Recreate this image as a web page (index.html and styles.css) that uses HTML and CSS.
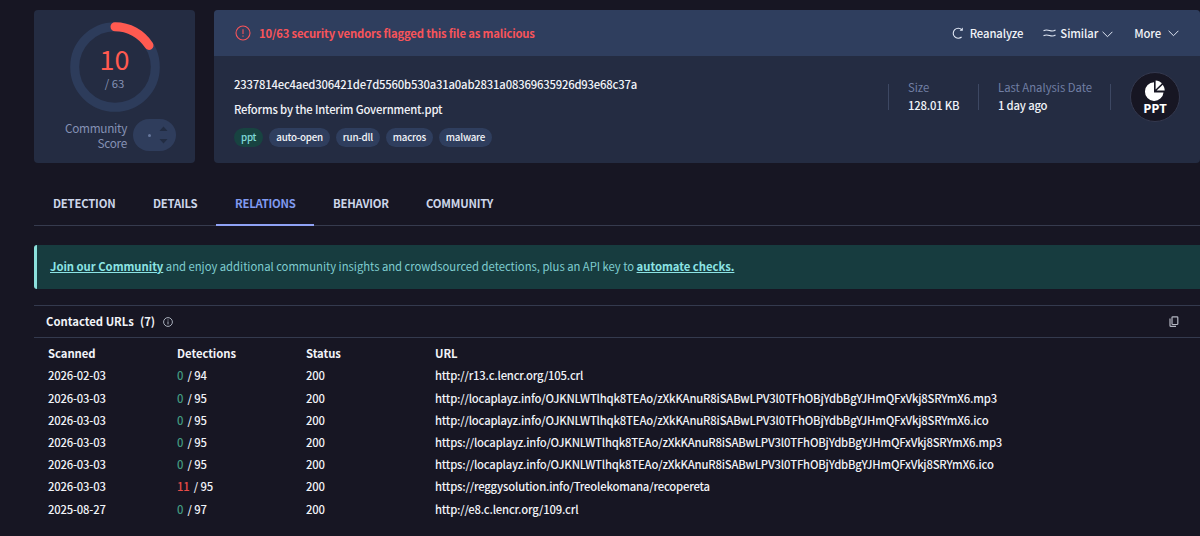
FILE: index.html
```html
<!DOCTYPE html>
<html lang="en">
<head>
    <meta charset="UTF-8">
    <meta name="viewport" content="width=device-width, initial-scale=1.0">
    <title>File report - Relations</title>
    <link rel="stylesheet" href="styles.css">
</head>
<body>
    <div class="summary">
        <div class="score-card">
            <div class="gauge">
                <svg width="90" height="90" viewBox="0 0 90 90" fill="none" stroke-width="9">
                    <circle cx="45" cy="45" r="40.3" stroke="#2d3c5b"/>
                    <path d="M45 4.7A40.3 40.3 0 0 1 79 23.4" stroke="#ff5a50" stroke-linecap="round"/>
                </svg>
                <div class="gauge-text">
                    <div class="positives">10</div>
                    <div class="total">/ 63</div>
                </div>
            </div>
            <div class="community">
                <div class="community-label">Community<br>Score</div>
                <div class="votes">
                    <span class="dot"></span>
                    <svg width="9" height="18" viewBox="0 0 9 18" fill="#222c42">
                        <path d="M0.5 5L4.5 0.5L8.5 5Z"/>
                        <path d="M0.5 13L4.5 17.5L8.5 13Z"/>
                    </svg>
                </div>
            </div>
        </div>

        <div class="file-card">
            <div class="file-header">
                <svg width="16" height="16" viewBox="0 0 16 16" fill="none" stroke="#f8545a" stroke-width="1.1">
                    <circle cx="8" cy="8" r="7"/>
                    <path d="M8 4.2V9"/>
                    <path d="M8 10.5V11.8"/>
                </svg>
                <div class="alert">10/63 security vendors flagged this file as malicious</div>
                <div class="action reanalyze">
                    <svg width="12" height="12" viewBox="0 0 12 12" fill="none" stroke="#dfe6f3" stroke-width="1.1">
                        <path d="M9.6 10A5 5 0 1 1 9.8 2.8"/>
                        <path d="M10.8 0.6V3.8H7.6Z" fill="#dfe6f3" stroke="none"/>
                    </svg>
                    <span>Reanalyze</span>
                </div>
                <div class="action similar">
                    <svg width="13" height="8" viewBox="0 0 13 8" fill="none" stroke="#dfe6f3" stroke-width="1.1">
                        <path d="M0.5 1.8C2.5 0.6 4.5 0.8 6.5 1.5S10.5 2.4 12.5 1"/>
                        <path d="M0.5 6.8C2.5 5.6 4.5 5.8 6.5 6.5S10.5 7.4 12.5 6"/>
                    </svg>
                    <span>Similar</span>
                    <svg class="chevron low" width="11" height="7" viewBox="0 0 11 7" fill="none" stroke="#dfe6f3">
                        <path d="M0.6 0.8L5.5 5.7L10.4 0.8"/>
                    </svg>
                </div>
                <div class="action more">
                    <span>More</span>
                    <svg class="chevron" width="11" height="7" viewBox="0 0 11 7" fill="none" stroke="#dfe6f3">
                        <path d="M0.6 0.8L5.5 5.7L10.4 0.8"/>
                    </svg>
                </div>
            </div>
            <div class="file-body">
                <div class="file-info">
                    <div class="hash">2337814ec4aed306421de7d5560b530a31a0ab2831a08369635926d93e68c37a</div>
                    <div class="name">Reforms by the Interim Government.ppt</div>
                    <div class="tags">
                        <span class="tag type">ppt</span>
                        <span class="tag">auto-open</span>
                        <span class="tag">run-dll</span>
                        <span class="tag">macros</span>
                        <span class="tag">malware</span>
                    </div>
                </div>
                <div class="stats">
                    <div class="stat size">
                        <div class="stat-label">Size</div>
                        <div>128.01 KB</div>
                    </div>
                    <div class="stat date">
                        <div class="stat-label">Last Analysis Date</div>
                        <div>1 day ago</div>
                    </div>
                    <div class="file-type">
                        <svg width="22" height="23" viewBox="0 0 22 23" fill="#fff">
                            <path d="M10 2.3A9.3 9.3 0 1 0 19.5 12.4H10Z"/>
                            <path d="M11.6 0.4C14 0.4 16.3 1.6 17.8 3.4L11.6 9.4Z"/>
                            <path d="M18.8 4.7C20 6.5 20.7 8.5 20.7 10.6H12.6Z"/>
                        </svg>
                        <span>PPT</span>
                    </div>
                </div>
            </div>
        </div>
    </div>

    <div class="tabs">
        <div class="tab detection">DETECTION</div>
        <div class="tab details">DETAILS</div>
        <div class="tab relations active">RELATIONS</div>
        <div class="tab behavior">BEHAVIOR</div>
        <div class="tab comm">COMMUNITY</div>
    </div>

    <div class="banner">
        <p><a>Join our Community</a> and enjoy additional community insights and crowdsourced detections, plus an API key to <a>automate checks.</a></p>
    </div>

    <div class="section-header">
        <span class="section-title">Contacted URLs</span>
        <span class="section-count">(7)</span>
        <svg width="10" height="10" viewBox="0 0 10 10" fill="none" stroke="#b9bfcc" stroke-width="0.9">
            <circle cx="5" cy="5" r="4.4"/>
            <path d="M5 4.4V7.4M5 2.5V3.5"/>
        </svg>
        <svg class="copy" width="10" height="11" viewBox="0 0 10 11" fill="none" stroke="#b4b7c2" stroke-width="1.2">
            <rect x="3" y="0.8" width="5.8" height="7.7" rx="0.8"/>
            <path d="M1 2.6V9.4Q1 10.3 1.9 10.3H7"/>
        </svg>
    </div>

    <table class="urls">
        <thead>
            <tr><th class="col">Scanned</th><th class="col">Detections</th><th class="col">Status</th><th>URL</th></tr>
        </thead>
        <tbody>
            <tr><td>2026-02-03</td><td><span class="clean">0</span> / 94</td><td>200</td><td>http://r13.c.lencr.org/105.crl</td></tr>
            <tr><td>2026-03-03</td><td><span class="clean">0</span> / 95</td><td>200</td><td>http://locaplayz.info/OJKNLWTlhqk8TEAo/zXkKAnuR8iSABwLPV3l0TFhOBjYdbBgYJHmQFxVkj8SRYmX6.mp3</td></tr>
            <tr><td>2026-03-03</td><td><span class="clean">0</span> / 95</td><td>200</td><td>http://locaplayz.info/OJKNLWTlhqk8TEAo/zXkKAnuR8iSABwLPV3l0TFhOBjYdbBgYJHmQFxVkj8SRYmX6.ico</td></tr>
            <tr><td>2026-03-03</td><td><span class="clean">0</span> / 95</td><td>200</td><td>https://locaplayz.info/OJKNLWTlhqk8TEAo/zXkKAnuR8iSABwLPV3l0TFhOBjYdbBgYJHmQFxVkj8SRYmX6.mp3</td></tr>
            <tr><td>2026-03-03</td><td><span class="clean">0</span> / 95</td><td>200</td><td>https://locaplayz.info/OJKNLWTlhqk8TEAo/zXkKAnuR8iSABwLPV3l0TFhOBjYdbBgYJHmQFxVkj8SRYmX6.ico</td></tr>
            <tr><td>2026-03-03</td><td><span class="flagged">11</span> / 95</td><td>200</td><td>https://reggysolution.info/Treolekomana/recopereta</td></tr>
            <tr><td>2025-08-27</td><td><span class="clean">0</span> / 97</td><td>200</td><td>http://e8.c.lencr.org/109.crl</td></tr>
        </tbody>
    </table>
</body>
</html>
```
FILE: styles.css
```css
* {
    box-sizing: border-box;
}
body {
    margin: 0;
    padding: 10px 0 0 34px;
    height: 536px;
    overflow: hidden;
    background: #171623;
    color: #f1f3f8;
    font-family: "Noto Sans CJK SC", "Noto Sans", sans-serif;
    font-size: 11.3px;
    line-height: 16px;
    white-space: nowrap;
}
svg {
    display: block;
    flex: none;
}
.summary {
    display: flex;
    gap: 19px;
    height: 153px;
}
.score-card {
    width: 161px;
    padding-top: 12px;
    border-radius: 4px;
    background: #242c42;
}
.gauge {
    display: grid;
    width: 90px;
    margin: 0 auto;
}
.gauge > * {
    grid-area: 1 / 1;
}
.gauge-text {
    text-align: center;
    padding-top: 24px;
}
.positives {
    font-size: 27px;
    line-height: 26px;
    color: #ff5a50;
}
.total {
    margin-top: 3px;
    color: #8491b4;
}
.community {
    display: flex;
    align-items: center;
    gap: 6px;
    margin-top: 7px;
    padding-left: 31px;
}
.community-label {
    width: 62px;
    text-align: right;
    font-size: 11.8px;
    line-height: 15.5px;
    letter-spacing: -0.3px;
    color: #8491b4;
}
.votes {
    display: flex;
    align-items: center;
    justify-content: space-between;
    width: 43px;
    height: 32px;
    padding: 0 8px 0 15px;
    border-radius: 16px;
    background: #2f3d5c;
}
.dot {
    width: 3px;
    height: 3px;
    border-radius: 50%;
    background: #66779c;
}
.file-card {
    flex: 1;
    border-radius: 4px;
    overflow: hidden;
    background: #242c42;
}
.file-header {
    display: flex;
    align-items: center;
    height: 46px;
    padding: 0 21px;
    background: #2f3e5e;
}
.alert {
    flex: 1;
    margin-left: 8px;
    font-weight: bold;
    letter-spacing: -0.18px;
    color: #f8545a;
}
.action {
    display: flex;
    align-items: center;
    font-weight: 500;
    letter-spacing: -0.1px;
}
.reanalyze {
    gap: 6px;
}
.similar {
    gap: 4px;
    margin-left: 20px;
}
.more {
    gap: 7px;
    margin-left: 21px;
}
.low {
    margin-top: 3px;
}
.file-body {
    display: flex;
    justify-content: space-between;
    padding: 20px 20px 0 20px;
}
.file-info,
.stat {
    font-weight: 500;
    letter-spacing: -0.19px;
}
.name {
    margin-top: 9px;
}
.tags {
    display: flex;
    gap: 6px;
    margin-top: 11px;
}
.tag {
    height: 19px;
    padding: 0 7px;
    border-radius: 10px;
    background: #2f3e5e;
    font-size: 9.8px;
    line-height: 18px;
    letter-spacing: -0.25px;
}
.type {
    background: #184341;
    color: #7fd8d8;
}
.stats {
    display: flex;
    margin-top: -4px;
}
.stat {
    height: 26px;
    margin-top: 12px;
    padding-left: 19px;
    border-left: 1px solid #3d4863;
}
.stat > div {
    position: relative;
    top: -5px;
    height: 18px;
}
.stat .stat-label {
    font-weight: normal;
    letter-spacing: 0;
    color: #717fa4;
}
.size {
    width: 90px;
}
.date {
    width: 133px;
    border-right: 1px solid #3d4863;
}
.file-type {
    display: flex;
    flex-direction: column;
    align-items: center;
    width: 50px;
    height: 50px;
    margin-left: 19px;
    padding-top: 7px;
    border: 1px solid #34394f;
    border-radius: 50%;
    background: #171623;
    color: #fff;
    font-family: "Open Sans", sans-serif;
    font-size: 13px;
    font-weight: bold;
    line-height: 10px;
    letter-spacing: -0.2px;
}
.tabs {
    display: flex;
    height: 63px;
    border-bottom: 1px solid #363b4e;
}
.tab {
    height: 63px;
    padding: 32px 0 0 19px;
    font-weight: bold;
    letter-spacing: -0.2px;
    color: #cdd6ea;
}
.detection {
    width: 100px;
}
.details {
    width: 82px;
}
.relations {
    width: 98px;
}
.behavior {
    width: 93px;
}
.active {
    border-bottom: 2px solid #8fa2f5;
    color: #809af0;
}
.banner {
    height: 44px;
    margin-top: 19px;
    padding: 13px 0 0 13px;
    border-left: 3px solid #8ce0dc;
    border-radius: 3px 0 0 3px;
    background: #173c3f;
    color: #7fcdd0;
    letter-spacing: -0.03px;
}
.banner p {
    margin: 0;
}
.banner a {
    font-weight: bold;
    text-decoration: underline;
    color: #8ce4e4;
}
.section-header {
    display: flex;
    align-items: center;
    height: 33px;
    margin-top: 16px;
    padding: 0 21px 0 12px;
    border-top: 1px solid #343a4e;
    border-bottom: 1px solid #343a4e;
    font-weight: bold;
}
.section-title,
.section-count {
    padding-bottom: 1px;
}
.section-count {
    margin: 0 8px 0 6px;
}
.copy {
    margin-left: auto;
}
.urls {
    width: 100%;
    margin-top: 4px;
    border-collapse: collapse;
    table-layout: fixed;
}
.urls th,
.urls td {
    height: 22.2px;
    padding: 0 0 0 14px;
    text-align: left;
    font-weight: 500;
    letter-spacing: -0.19px;
}
.urls th {
    font-weight: bold;
    letter-spacing: -0.05px;
}
.urls td {
    padding-top: 0.4px;
}
.col {
    width: 129px;
}
.clean {
    margin-right: 2px;
    color: #429a80;
}
.flagged {
    margin-right: 2px;
    color: #e84c48;
}
```
